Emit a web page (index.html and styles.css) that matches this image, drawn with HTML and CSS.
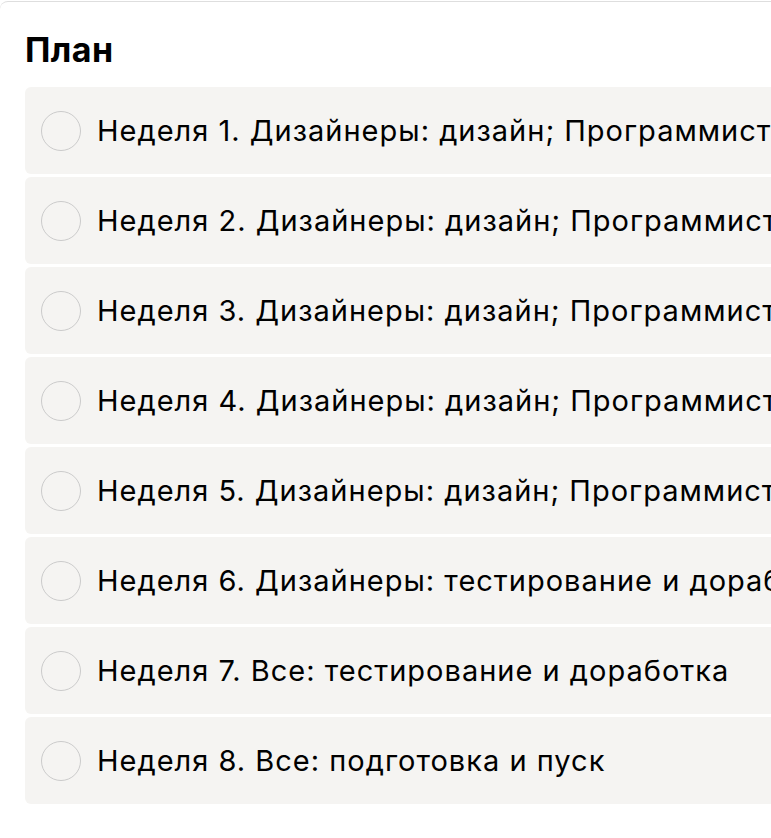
FILE: index.html
```html
<!DOCTYPE html>
<html lang="ru">
<head>
    <meta charset="UTF-8">
    <meta name="viewport" content="width=device-width, initial-scale=1.0">
    <title>План</title>
    <link rel="stylesheet" href="styles.css">
</head>
<body>

    <div class="plan-card">
        <h2 class="plan-title">План</h2>

        <!-- Weekly plan -->
        <ul class="plan-list">
            <li class="plan-item"><span class="check"></span><span class="plan-text">Неделя 1. Дизайнеры: дизайн; Программисты: разработка</span></li>
            <li class="plan-item"><span class="check"></span><span class="plan-text">Неделя 2. Дизайнеры: дизайн; Программисты: разработка</span></li>
            <li class="plan-item"><span class="check"></span><span class="plan-text">Неделя 3. Дизайнеры: дизайн; Программисты: разработка</span></li>
            <li class="plan-item"><span class="check"></span><span class="plan-text">Неделя 4. Дизайнеры: дизайн; Программисты: разработка</span></li>
            <li class="plan-item"><span class="check"></span><span class="plan-text">Неделя 5. Дизайнеры: дизайн; Программисты: разработка</span></li>
            <li class="plan-item"><span class="check"></span><span class="plan-text">Неделя 6. Дизайнеры: тестирование и доработка; Программисты: разработка</span></li>
            <li class="plan-item"><span class="check"></span><span class="plan-text">Неделя 7. Все: тестирование и доработка</span></li>
            <li class="plan-item"><span class="check"></span><span class="plan-text">Неделя 8. Все: подготовка и пуск</span></li>
        </ul>
    </div>

</body>
</html>
```

FILE: styles.css
```css
html, body { overflow: hidden; }
body { font-family: Inter, "Noto Sans", sans-serif; background: #fff; color: #000; margin: 0; }
.plan-card {
    width: 1100px; margin-top: 1px; padding: 28px 25px 30px;
    border-top: 1px solid #dedede; border-radius: 8px 0 0 0;
}
.plan-title { font-size: 34px; font-weight: 700; letter-spacing: 0.4px; margin: 0 0 17px; line-height: 40px; }
.plan-list { list-style: none; margin: 0; padding: 0; display: flex; flex-direction: column; gap: 3px; }
.plan-item {
    display: flex; align-items: center; gap: 16px; height: 87px; padding: 0 16px;
    background: #f5f4f2; border-radius: 6px; box-sizing: border-box;
}
.check {
    width: 40px; height: 40px; flex: none; box-sizing: border-box;
    border: 1px solid #cbcbcb; border-radius: 50%;
}
.plan-text { font-size: 29px; letter-spacing: 1px; white-space: nowrap; }
```
